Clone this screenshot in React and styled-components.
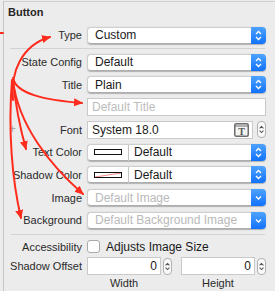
import React from 'react';
import styled, { createGlobalStyle } from 'styled-components';

const Global = createGlobalStyle`
  html, body { margin: 0; padding: 0; background: #ececec; }
  body { font-family: "Liberation Sans", Arial, sans-serif; color: #222; }
`;

const Panel = styled.div`
  position: relative;
  width: 275px;
  height: 291px;
  overflow: hidden;
  background: #ececec;
  padding: 1px 0 0 3px;
  box-sizing: border-box;
`;

const Frame = styled.div`
  height: 100%;
  border-left: 1px solid #c4c4c4;
  border-top: 1px solid #cfcfcf;
  box-sizing: border-box;
  padding-right: 9px;
  display: flex;
  flex-direction: column;
`;

const Header = styled.div`
  font-size: 11px;
  font-weight: bold;
  line-height: 13px;
  margin: 4px 0 0 4px;
  color: #262626;
`;

const Rows = styled.div`
  display: flex;
  flex-direction: column;
  gap: ${p => p.$gap || 0}px;
  margin-top: ${p => p.$top || 0}px;
`;

const Row = styled.div`
  display: flex;
  align-items: ${p => p.$align || 'center'};
  height: ${p => p.$h || 18}px;
`;

const Label = styled.div`
  width: 78px;
  flex-shrink: 0;
  text-align: right;
  font-size: 11px;
  line-height: ${p => p.$lh || 'normal'};
  margin-right: 5px;
  color: #2a2a2a;
  white-space: nowrap;
`;

const Sep = styled.div`
  height: 1px;
  background: #d2d2d2;
  margin: ${p => p.$m || '4px 1px 4px 6px'};
`;

const PopupWrap = styled.div`
  flex: 1;
  display: flex;
  height: 17px;
  border-radius: 4px;
  box-shadow: 0 0.5px 1px rgba(0,0,0,0.25);
`;

const PopupBody = styled.div`
  flex: 1;
  display: flex;
  align-items: center;
  background: #fff;
  border: 1px solid #cecece;
  border-bottom-color: #adadad;
  border-right: none;
  border-left: ${p => (p.$joined ? 'none' : '1px solid #cecece')};
  border-radius: ${p => (p.$joined ? '0' : '4px 0 0 4px')};
  font-size: 12px;
  padding-left: ${p => p.$pl || 7}px;
  color: ${p => (p.$dim ? '#b9b9b9' : '#1a1a1a')};
  overflow: hidden;
  white-space: nowrap;
`;

const Blue = styled.div`
  width: 15px;
  flex-shrink: 0;
  border-radius: 0 4px 4px 0;
  background: linear-gradient(#4ea3ff, #1272fb);
  display: flex;
  align-items: center;
  justify-content: center;
`;

const Well = styled.div`
  width: 40px;
  flex-shrink: 0;
  display: flex;
  align-items: center;
  justify-content: center;
  background: #fff;
  border: 1px solid #cecece;
  border-bottom-color: #adadad;
  border-radius: 4px 0 0 4px;
  border-right: 1px solid #c4c4c4;
`;

const Swatch = styled.div`
  position: relative;
  width: 26px;
  height: 4px;
  border: 1px solid #111;
  background: #fff;
  display: flex;
`;

const Field = styled.div`
  flex: ${p => (p.$w ? '0 0 auto' : 1)};
  width: ${p => (p.$w ? `${p.$w}px` : 'auto')};
  height: 18px;
  box-sizing: border-box;
  display: flex;
  align-items: center;
  justify-content: ${p => (p.$right ? 'flex-end' : 'flex-start')};
  background: #fff;
  border: 1px solid #c9c9c9;
  font-size: 12px;
  padding: 0 3px 0 4px;
  color: ${p => (p.$dim ? '#bdbdbd' : '#1a1a1a')};
  white-space: nowrap;
`;

const FieldText = styled.span`
  flex: 1;
`;

const SmallStepper = styled.div`
  width: 9px;
  height: 17px;
  flex-shrink: 0;
  margin-left: ${p => p.$ml || 3}px;
  border: 1px solid #b0b0b0;
  border-radius: 4px;
  background: #fafafa;
  display: flex;
  align-items: center;
  justify-content: center;
  box-sizing: border-box;
`;

const Check = styled.div`
  width: 11px;
  height: 11px;
  border: 1px solid #a9a9a9;
  border-radius: 3px;
  background: #fff;
  margin-right: 6px;
  flex-shrink: 0;
`;

const CheckText = styled.span`
  font-size: 12px;
  color: #1a1a1a;
`;

const OffsetGroup = styled.div`
  display: flex;
  flex-direction: column;
  margin-right: ${p => p.$mr || 0}px;
`;

const OffsetLine = styled.div`
  display: flex;
  align-items: center;
`;

const Caption = styled.div`
  width: ${p => p.$w}px;
  text-align: center;
  font-size: 11px;
  margin-top: 2px;
  color: #2a2a2a;
`;

const Plus = styled.span`
  position: absolute;
  left: 9px;
  top: 122px;
  font-size: 12px;
  color: #a8a8a8;
`;

const Overlay = styled.svg`
  position: absolute;
  left: 0;
  top: 0;
  pointer-events: none;
`;

const Updown = ({ color = '#fff', w = 9, h = 13 }) => (
  <svg width={w} height={h} viewBox="0 0 9 13">
    <path d="M2 5 L4.5 2.5 L7 5" fill="none" stroke={color} strokeWidth="1.3" />
    <path d="M2 8 L4.5 10.5 L7 8" fill="none" stroke={color} strokeWidth="1.3" />
  </svg>
);

const Down = () => (
  <svg width="9" height="9" viewBox="0 0 9 9">
    <path d="M2 3.5 L4.5 6 L7 3.5" fill="none" stroke="#fff" strokeWidth="1.3" />
  </svg>
);

const Cross = () => (
  <svg width="26" height="4" viewBox="0 0 26 4">
    <line x1="0" y1="4" x2="26" y2="0" stroke="#ef6a6a" strokeWidth="0.8" />
  </svg>
);

const TIcon = () => (
  <svg width="15" height="14" viewBox="0 0 15 14" style={{ flexShrink: 0 }}>
    <rect x="0.75" y="0.75" width="13.5" height="12.5" rx="1.5" fill="#f4f4f4" stroke="#6d6d6d" strokeWidth="1.5" />
    <line x1="1" y1="3" x2="14" y2="3" stroke="#6d6d6d" strokeWidth="1" />
    <text x="7.5" y="12" textAnchor="middle" fontFamily="Liberation Serif, serif" fontWeight="bold" fontSize="10" fill="#555">T</text>
  </svg>
);

const Popup = ({ children, dim, single }) => (
  <PopupWrap>
    <PopupBody $dim={dim}>{children}</PopupBody>
    <Blue>{single ? <Down /> : <Updown />}</Blue>
  </PopupWrap>
);

const ColorPopup = ({ crossed }) => (
  <PopupWrap>
    <Well><Swatch>{crossed && <Cross />}</Swatch></Well>
    <PopupBody $pl={5} $joined>Default</PopupBody>
    <Blue><Updown /></Blue>
  </PopupWrap>
);

const Offset = ({ caption, mr }) => (
  <OffsetGroup $mr={mr}>
    <OffsetLine>
      <Field $w={74} $right>0</Field>
      <SmallStepper $ml={2}><Updown color="#555" w={7} h={13} /></SmallStepper>
    </OffsetLine>
    <Caption $w={74}>{caption}</Caption>
  </OffsetGroup>
);

export default function App() {
  return (
    <>
      <Global />
      <Panel>
        <Frame>
          <Header>Button</Header>
          <Rows $top={7}>
            <Row><Label>Type</Label><Popup>Custom</Popup></Row>
          </Rows>
          <Sep />
          <Rows $gap={4.6}>
            <Row><Label>State Config</Label><Popup>Default</Popup></Row>
            <Row><Label>Title</Label><Popup>Plain</Popup></Row>
            <Row><Label /><Field $dim>Default Title</Field></Row>
            <Row>
              <Label>Font</Label>
              <Field><FieldText>System 18.0</FieldText><TIcon /></Field>
              <SmallStepper $ml={4}><Updown color="#555" w={7} h={13} /></SmallStepper>
            </Row>
            <Row><Label>Text Color</Label><ColorPopup /></Row>
            <Row><Label>Shadow Color</Label><ColorPopup crossed /></Row>
            <Row><Label>Image</Label><Popup dim single>Default Image</Popup></Row>
            <Row><Label>Background</Label><Popup dim single>Default Background Image</Popup></Row>
          </Rows>
          <Sep $m="5px 1px 5px 7px" />
          <Rows $gap={4}>
            <Row $h={13}>
              <Label>Accessibility</Label>
              <Check />
              <CheckText>Adjusts Image Size</CheckText>
            </Row>
            <Row $h={30} $align="flex-start">
              <Label $lh="18px">Shadow Offset</Label>
              <Offset caption="Width" mr={9} />
              <Offset caption="Height" />
            </Row>
          </Rows>
        </Frame>
        <Plus>+</Plus>
        <Overlay width="275" height="291" viewBox="0 0 275 291">
          <defs>
            <marker id="ah" markerUnits="userSpaceOnUse" markerWidth="10" markerHeight="9" refX="8" refY="4" orient="auto">
              <path d="M0,0 L9,4 L0,8 z" fill="#ff2b1c" />
            </marker>
          </defs>
          <g fill="none" stroke="#ff2b1c" strokeWidth="2" strokeLinecap="round">
            <path d="M0,33 L3,33" />
            <path d="M13,100 C10,72 22,45 50,37" markerEnd="url(#ah)" />
            <path d="M13,78 C16,94 45,100 82,103" markerEnd="url(#ah)" />
            <path d="M13,80 C16,110 20,128 26,149" markerEnd="url(#ah)" />
            <path d="M13,80 C18,125 50,165 83,194" markerEnd="url(#ah)" />
            <path d="M12,80 C8,130 12,180 21,218" markerEnd="url(#ah)" />
          </g>
        </Overlay>
      </Panel>
    </>
  );
}
